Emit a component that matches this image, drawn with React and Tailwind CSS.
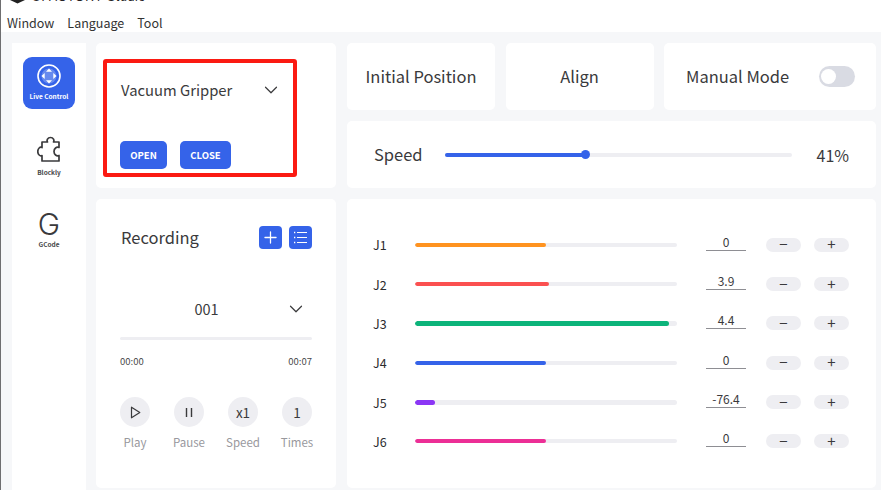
import React from 'react'
import { ChevronDown, Plus } from 'lucide-react'

const joints = [
  { name: 'J1', value: '0', fill: 'w-[50%]', color: 'bg-[#ff9320]', bar: 'h-[4px]' },
  { name: 'J2', value: '3.9', fill: 'w-[51%]', color: 'bg-[#fb5050]', bar: 'h-[4px]' },
  { name: 'J3', value: '4.4', fill: 'w-[97%]', color: 'bg-[#0cb47a]', bar: 'h-[5px]' },
  { name: 'J4', value: '0', fill: 'w-[50%]', color: 'bg-[#3563e9]', bar: 'h-[4px]' },
  { name: 'J5', value: '-76.4', fill: 'w-[7.6%]', color: 'bg-[#8b36f5]', bar: 'h-[5px]' },
  { name: 'J6', value: '0', fill: 'w-[50%]', color: 'bg-[#ec2f96]', bar: 'h-[4px]' },
]

function LiveIcon() {
  return (
    <svg width="24" height="24" viewBox="0 0 24 24" fill="none">
      <circle cx="12" cy="12" r="11" stroke="white" strokeWidth="1.6" />
      <circle cx="12" cy="12" r="7.500" fill="white" opacity="0.25" />
      <path d="M12 4.500l3 3.200H9zM12 19.500l3-3.200H9zM4.500 12l3.200-3v6zM19.500 12l-3.200-3v6z" fill="white" />
    </svg>
  )
}

function PuzzleIcon() {
  return (
    <svg width="24" height="26" viewBox="0 0 24 26" fill="none" stroke="#3a3a3c" strokeWidth="1.7" strokeLinejoin="round">
      <path d="M5 6H10.500C9.500 4.500 10.500 1.500 13.500 1.500C16.500 1.500 17.500 4.500 16.500 6H22V11.500C19.500 10.500 17 12.500 17 15.500C17 18.500 19.500 20.500 22 19.500V25H5V19.500C3 20.500 0.800 18.500 0.800 15.500C0.800 12.500 3 10.500 5 11.500Z" />
    </svg>
  )
}

function ListIcon() {
  return (
    <svg width="15" height="15" viewBox="0 0 15 15" fill="none" stroke="white" strokeWidth="1.2">
      <path d="M4 2.500h10M4 7.500h10M4 12.500h10" />
      <path d="M1 2.500h1.300M1 7.500h1.300M1 12.500h1.300" strokeWidth="1.600" />
    </svg>
  )
}

function PlayIcon() {
  return (
    <svg width="11" height="13" viewBox="0 0 11 13" fill="none" stroke="#3a3a3c" strokeWidth="1.200" strokeLinejoin="round">
      <path d="M1.500 1.200L9.800 6.500L1.500 11.800Z" />
    </svg>
  )
}

function PauseIcon() {
  return (
    <svg width="8" height="11" viewBox="0 0 8 11" fill="none" stroke="#3a3a3c" strokeWidth="1.400">
      <path d="M1.500 1v9M6.500 1v9" />
    </svg>
  )
}

function RoundControl({ label, children }) {
  return (
    <div className="flex w-[30px] flex-col items-center">
      <div className="flex h-[30px] w-[30px] items-center justify-center rounded-full bg-[#eeeef2] text-[13.500px] text-[#3a3a3c]">
        {children}
      </div>
      <span className="mt-[5px] text-[11.500px] leading-[20px] whitespace-nowrap text-[#98989d]">{label}</span>
    </div>
  )
}

function JointRow({ joint }) {
  return (
    <div className="flex h-[39.350px] items-center">
      <span className="ml-[-1px] w-[42px] pt-[2px] text-[12.500px] text-[#2c2c2e]">{joint.name}</span>
      <div className={`w-[262px] overflow-hidden rounded-full bg-[#eeeef2] ${joint.bar}`}>
        <div className={`h-full rounded-full ${joint.fill} ${joint.color}`} />
      </div>
      <div className="mt-[-5px] ml-[29px] h-[17px] w-[40px] border-b border-[#8e8e93] text-center text-[12px] leading-[15px] text-[#3a3a3c]">
        {joint.value}
      </div>
      <div className="ml-[20px] flex h-[14px] w-[35px] items-center justify-center rounded-full bg-[#eeeef2] text-[15px] text-[#3a3a3c]">
        −
      </div>
      <div className="ml-[13px] flex h-[14px] w-[35px] items-center justify-center rounded-full bg-[#eeeef2] text-[15px] text-[#3a3a3c]">
        +
      </div>
    </div>
  )
}

export default function App() {
  return (
    <div className="flex h-[490px] w-[881px] flex-col overflow-hidden border-l border-[#6e6e70] bg-white font-['Noto_Sans_CJK_SC','Noto_Sans',sans-serif] text-[#3a3a3c]">
      <div className="h-[32px] shrink-0">
        <div className="flex h-[14px] items-start overflow-hidden pl-[9px]">
          <svg width="15" height="4" viewBox="0 0 15 4" className="shrink-0">
            <polygon points="0,0 15,0 7.500,3.500" fill="#222" />
          </svg>
          <span className="mt-[-9px] ml-[7px] font-['Liberation_Sans',sans-serif] text-[12px] leading-[12px] tracking-[0.8px] whitespace-nowrap text-[#222]">
            UFACTORY Studio
          </span>
        </div>
        <div className="flex gap-[13px] pl-[6px] text-[12.500px] leading-[17px] text-[#333]">
          <span>Window</span>
          <span>Language</span>
          <span>Tool</span>
        </div>
      </div>

      <div className="flex min-h-0 flex-1 bg-[#f6f7f9] pt-[11px] pl-[11px]">
        <aside className="flex w-[74px] shrink-0 flex-col items-center bg-white pt-[14px]">
          <div className="flex h-[52px] w-[52px] flex-col items-center rounded-[9px] bg-[#3563e9] pt-[7px]">
            <LiveIcon />
            <span className="mt-[3px] text-[6.500px] leading-[10px] font-bold whitespace-nowrap text-white">Live Control</span>
          </div>
          <div className="mt-[27px] flex flex-col items-center">
            <PuzzleIcon />
            <span className="mt-[5px] text-[6.500px] leading-[10px] font-bold text-[#48484a]">Blockly</span>
          </div>
          <div className="mt-[34px] flex flex-col items-center">
            <span className="h-[26px] font-['Inter',sans-serif] text-[30px] leading-[26px] font-light text-[#3a3a3c]">G</span>
            <span className="mt-[2px] text-[6.500px] leading-[10px] font-bold text-[#48484a]">GCode</span>
          </div>
        </aside>

        <div className="ml-[10px] flex w-[240px] shrink-0 flex-col gap-[11px]">
          <section className="relative h-[145px] rounded-[5px] bg-white px-[24px]">
            <div className="absolute top-[16px] left-[7px] h-[118px] w-[194px] rounded-[3px] border-[4px] border-[#fb1a12]" />
            <div className="flex h-[98px] items-center justify-between pr-[30px] pb-[3px]">
              <span className="ml-[1px] text-[14.800px]">Vacuum Gripper</span>
              <ChevronDown size={22} strokeWidth={1.300} className="mt-[-1px]" />
            </div>
            <div className="flex gap-[13px]">
              <button className="h-[28px] w-[47px] rounded-[5px] bg-[#3563e9] text-[9.500px] font-bold text-white">OPEN</button>
              <button className="h-[28px] w-[51px] rounded-[5px] bg-[#3563e9] text-[9.500px] font-bold text-white">CLOSE</button>
            </div>
          </section>

          <section className="h-[289px] rounded-[5px] bg-white px-[24px] pt-[27px]">
            <div className="flex h-[23px] items-center justify-between">
              <span className="mt-[-2px] ml-[1px] text-[16.500px] leading-[24px]">Recording</span>
              <div className="flex gap-[7px]">
                <div className="flex h-[23px] w-[23px] items-center justify-center rounded-[4px] bg-[#3563e9] text-white">
                  <Plus size={19} strokeWidth={1.600} />
                </div>
                <div className="flex h-[23px] w-[23px] items-center justify-center rounded-[4px] bg-[#3563e9]">
                  <ListIcon />
                </div>
              </div>
            </div>
            <div className="mt-[48px] flex h-[24px] items-center">
              <span className="flex-1 pl-[8px] text-center text-[14.500px]">001</span>
              <ChevronDown size={22} strokeWidth={1.300} className="mr-[5px]" />
            </div>
            <div className="mt-[16px] h-[3px] rounded-full bg-[#eeeef2]" />
            <div className="mt-[14px] flex justify-between text-[9.500px] leading-[14px] text-[#48484a]">
              <span>00:00</span>
              <span>00:07</span>
            </div>
            <div className="mt-[29px] flex justify-between">
              <RoundControl label="Play">
                <PlayIcon />
              </RoundControl>
              <RoundControl label="Pause">
                <PauseIcon />
              </RoundControl>
              <RoundControl label="Speed">x1</RoundControl>
              <RoundControl label="Times">1</RoundControl>
            </div>
          </section>
        </div>

        <div className="ml-[11px] flex w-[529px] shrink-0 flex-col gap-[11px]">
          <div className="flex h-[67px] gap-[10.500px]">
            <div className="flex w-[148px] items-center justify-center rounded-[5px] bg-white text-[16.500px]">Initial Position</div>
            <div className="flex w-[148px] items-center justify-center rounded-[5px] bg-white text-[16.500px]">Align</div>
            <div className="flex flex-1 items-center justify-between rounded-[5px] bg-white pr-[21px] pl-[22px] text-[16.500px]">
              <span>Manual Mode</span>
              <div className="flex h-[21px] w-[36px] items-center rounded-full bg-[#d9dbe3] pl-[2px]">
                <div className="h-[15px] w-[15px] rounded-full bg-white" />
              </div>
            </div>
          </div>

          <div className="flex h-[67px] items-center rounded-[5px] bg-white pr-[27px] pl-[27px]">
            <span className="w-[71px] text-[16.500px]">Speed</span>
            <div className="relative h-[4px] w-[347px] rounded-full bg-[#eeeef2]">
              <div className="h-full w-[41%] rounded-full bg-[#3563e9]" />
              <div className="absolute top-[-2.500px] left-[136px] h-[9px] w-[9px] rounded-full bg-[#3563e9]" />
            </div>
            <span className="ml-auto text-[16px]">41%</span>
          </div>

          <section className="h-[289px] rounded-[5px] bg-white pt-[26px] pl-[27px]">
            {joints.map((joint) => (
              <JointRow key={joint.name} joint={joint} />
            ))}
          </section>
        </div>
      </div>
    </div>
  )
}
